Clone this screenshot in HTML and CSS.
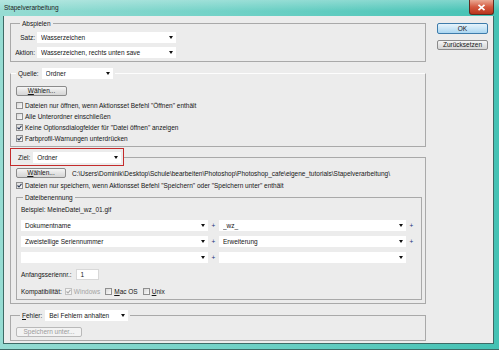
FILE: index.html
```html
<!DOCTYPE html>
<html lang="de">
<head>
    <meta charset="UTF-8">
    <meta name="viewport" content="width=device-width, initial-scale=1.0">
    <title>Stapelverarbeitung</title>
    <link rel="stylesheet" href="styles.css">
</head>
<body>
    <div class="window">
        <div class="titlebar">
            <span class="title">Stapelverarbeitung</span>
            <span class="close">
                <svg width="9" height="7" viewBox="0 0 9 7"><path d="M1.5 0.8 L7.5 6.2 M7.5 0.8 L1.5 6.2" stroke="#fff" stroke-width="1.7"/></svg>
            </span>
        </div>
        <div class="client">
            <div class="main">
                <fieldset class="group play">
                    <legend class="legend legend-play">Abspielen</legend>
                    <div class="field">
                        <span class="field-label">Satz:</span>
                        <span class="select select-play"><span class="select-text">Wasserzeichen</span><span class="arrow"></span></span>
                    </div>
                    <div class="field field-gap">
                        <span class="field-label">Aktion:</span>
                        <span class="select select-play"><span class="select-text">Wasserzeichen, rechts unten save</span><span class="arrow"></span></span>
                    </div>
                </fieldset>

                <fieldset class="group source">
                    <legend class="legend legend-select">
                        <span class="legend-label">Quelle:</span>
                        <span class="select select-source"><span class="select-text">Ordner</span><span class="arrow"></span></span>
                    </legend>
                    <button class="btn btn-choose"><u>W</u>ählen...</button>
                    <div class="checks">
                        <label class="check-row"><span class="box"></span><span>Dateien nur öffnen, wenn Aktionsset Befehl "Öffnen" enthält</span></label>
                        <label class="check-row"><span class="box"></span><span>Alle Unterordner einschließen</span></label>
                        <label class="check-row"><span class="box"><svg width="5" height="5" viewBox="0 0 5 5"><path d="M0.5 2.5 L2 4 L4.5 0.8" fill="none" stroke="#2d3b57" stroke-width="1.1"/></svg></span><span>Keine Optionsdialogfelder für "Datei öffnen" anzeigen</span></label>
                        <label class="check-row"><span class="box"><svg width="5" height="5" viewBox="0 0 5 5"><path d="M0.5 2.5 L2 4 L4.5 0.8" fill="none" stroke="#2d3b57" stroke-width="1.1"/></svg></span><span>Farbprofil-Warnungen unterdrücken</span></label>
                    </div>
                </fieldset>

                <fieldset class="group target">
                    <legend class="legend legend-select legend-marked">
                        <span class="legend-label">Ziel:</span>
                        <span class="select select-target"><span class="select-text">Ordner</span><span class="arrow"></span></span>
                    </legend>
                    <div class="path-row">
                        <button class="btn btn-choose btn-target"><u>W</u>ählen...</button>
                        <span class="path">C:\Users\Dominik\Desktop\Schule\bearbeiten\Photoshop\Photoshop_cafe\eigene_tutorials\Stapelverarbeitung\</span>
                    </div>
                    <label class="check-row save-row"><span class="box"><svg width="5" height="5" viewBox="0 0 5 5"><path d="M0.5 2.5 L2 4 L4.5 0.8" fill="none" stroke="#2d3b57" stroke-width="1.1"/></svg></span><span>Dateien nur speichern, wenn Aktionsset Befehl "Speichern" oder "Speichern unter" enthält</span></label>

                    <fieldset class="group naming">
                        <legend class="legend legend-naming">Dateibenennung</legend>
                        <div class="example">Beispiel: MeineDatei_wz_01.gif</div>
                        <div class="name-row first">
                            <span class="select select-name"><span class="select-text">Dokumentname</span><span class="arrow"></span></span>
                            <span class="plus">+</span>
                            <span class="select select-name"><span class="select-text">_wz_</span><span class="arrow"></span></span>
                            <span class="plus">+</span>
                        </div>
                        <div class="name-row">
                            <span class="select select-name"><span class="select-text">Zweistellige Seriennummer</span><span class="arrow"></span></span>
                            <span class="plus">+</span>
                            <span class="select select-name"><span class="select-text">Erweiterung</span><span class="arrow"></span></span>
                            <span class="plus">+</span>
                        </div>
                        <div class="name-row">
                            <span class="select select-name"><span class="select-text"></span><span class="arrow"></span></span>
                            <span class="plus">+</span>
                            <span class="select select-name"><span class="select-text"></span><span class="arrow"></span></span>
                        </div>
                        <div class="serial-row">
                            <span class="serial-label">Anfangsseriennr.:</span>
                            <span class="input">1</span>
                        </div>
                        <div class="compat-row">
                            <span class="compat-label">Kompatibilität:</span>
                            <label class="compat disabled"><span class="box box-disabled"><svg width="5" height="5" viewBox="0 0 5 5"><path d="M0.5 2.5 L2 4 L4.5 0.8" fill="none" stroke="#a8a8a8" stroke-width="1.1"/></svg></span><span>Windows</span></label>
                            <label class="compat"><span class="box"></span><span><u>M</u>ac OS</span></label>
                            <label class="compat"><span class="box"></span><span><u>U</u>nix</span></label>
                        </div>
                    </fieldset>
                </fieldset>

                <fieldset class="group errors">
                    <legend class="legend legend-select legend-errors">
                        <span class="legend-label"><u>F</u>ehler:</span>
                        <span class="select select-errors"><span class="select-text">Bei Fehlern anhalten</span><span class="arrow"></span></span>
                    </legend>
                    <button class="btn btn-save" disabled>Speichern unter...</button>
                </fieldset>
            </div>

            <div class="side">
                <button class="btn btn-ok">OK</button>
                <button class="btn btn-reset">Zurücksetzen</button>
            </div>
        </div>
    </div>
</body>
</html>
```

FILE: styles.css
```css
* {
    box-sizing: border-box;
}

body {
    margin: 0;
    font-family: "Liberation Sans", Arial, sans-serif;
    font-size: 6.5px;
    line-height: 9px;
    color: #151515;
    background-color: #fff;
}

.window {
    width: 499px;
    height: 350px;
    display: flex;
    flex-direction: column;
    padding: 0 5px 5px 3px;
    background: linear-gradient(90deg, #96dcd3 0%, #72d2c7 45%, #44c2b4 100%);
    border-bottom: 1px solid #3d6b66;
}

.titlebar {
    height: 16px;
    display: flex;
    align-items: flex-start;
    margin: 0 -5px 0 -3px;
    padding-left: 4px;
    background: linear-gradient(rgba(255, 255, 255, 0.3), rgba(255, 255, 255, 0) 70%);
}

.title {
    line-height: 16px;
    color: #1c1c1c;
}

.close {
    margin-left: auto;
    margin-right: 5px;
    width: 25px;
    height: 15px;
    display: flex;
    align-items: center;
    justify-content: center;
    border: 1px solid #5e2b20;
    border-top: 0;
    border-radius: 0 0 3px 3px;
    background: linear-gradient(#eaa994, #d4593f 50%, #b9341c);
}

.client {
    flex: 1;
    display: flex;
    background-color: #ececec;
    border: 1px solid #3d6b66;
    border-top: 0;
    padding-left: 6px;
}

.main {
    width: 416px;
    padding-top: 3px;
    display: flex;
    flex-direction: column;
}

.side {
    width: 51px;
    margin-left: 11px;
    padding-top: 7px;
    display: flex;
    flex-direction: column;
    gap: 6px;
}

/* group boxes */
.group {
    margin: 0;
    min-width: 0;
    padding: 0 3px 3px 5px;
    border: 1px solid #a9a9a9;
}

.legend {
    padding: 0 2px;
    line-height: 9px;
}

.legend-select {
    display: flex;
    align-items: center;
}

.legend-label {
    margin-right: 3px;
}

.legend-play {
    margin-left: 4px;
}

.play {
    padding-top: 4px;
}

.field {
    display: flex;
    align-items: center;
    margin-left: -2px;
}

.field-gap {
    margin-top: 4px;
}

.field-label {
    width: 21px;
    margin-right: 2px;
    text-align: right;
}

.source {
    margin-top: 6px;
    padding-top: 7px;
    padding-bottom: 2px;
    border-top-color: #fdfdfd;
}

.target {
    margin-top: 1px;
    padding-top: 2px;
}

.legend-marked {
    margin-left: -6px;
    padding: 3px 2px 2px 7px;
    border: 1px solid #c42b2b;
}

.errors {
    margin-top: 6px;
    padding-top: 6px;
}

.legend-errors {
    margin-left: 4px;
}

/* dropdowns */
.select {
    display: flex;
    align-items: center;
    height: 11px;
    padding: 0 3px 0 4px;
    background-color: #fff;
}

.select-text {
    flex: 1;
    white-space: nowrap;
    overflow: hidden;
}

.arrow {
    width: 0;
    height: 0;
    border-left: 2px solid transparent;
    border-right: 2px solid transparent;
    border-top: 3px solid #111;
}

.select-play {
    width: 139px;
}

.select-source {
    width: 71px;
}

.select-target {
    width: 88px;
}

.select-errors {
    width: 83px;
}

.select-name {
    width: 187px;
}

/* buttons */
.btn {
    height: 10px;
    padding: 0;
    font: inherit;
    line-height: 8px;
    color: #151515;
    border: 1px solid #8b8b8b;
    border-radius: 2px;
    background: linear-gradient(#f6f6f6, #e4e4e4 50%, #d6d6d6);
}

.btn-choose {
    width: 51px;
}

.btn-target {
    width: 50px;
}

.btn-ok {
    height: 11px;
    border-color: #3e7cab;
    background: linear-gradient(#e6f3fb, #c9e5f6 50%, #aad6f1);
}

.btn-reset {
    height: 10px;
}

.btn-save {
    width: 66px;
    color: #9a9a9a;
    border-color: #b9b9b9;
    background: #f3f3f3;
}

/* checkboxes */
.checks {
    margin-top: 4px;
}

.check-row {
    display: flex;
    align-items: center;
    height: 11px;
    gap: 2px;
    white-space: nowrap;
}

.box {
    width: 7px;
    height: 7px;
    display: flex;
    align-items: center;
    justify-content: center;
    border: 1px solid #8f8f8f;
    background: linear-gradient(135deg, #d9d9d9, #fbfbfb);
}

.box svg {
    display: block;
}

.box-disabled {
    border-color: #c2c2c2;
    background: #f4f4f4;
}

/* target */
.path-row {
    display: flex;
    align-items: center;
    gap: 6px;
    white-space: nowrap;
}

.save-row {
    margin-top: 2px;
}

.naming {
    margin-top: 2px;
    padding: 3px 3px 3px 4px;
}

.legend-naming {
    margin-left: 2px;
}

.example {
    height: 9px;
}

.name-row {
    display: flex;
    align-items: center;
    margin-top: 5px;
}

.name-row.first {
    margin-top: 6px;
}

.plus {
    width: 11px;
    text-align: center;
    color: #20307a;
}

.serial-row {
    display: flex;
    align-items: center;
    gap: 4px;
    margin-top: 6px;
}

.input {
    width: 23px;
    height: 11px;
    padding-left: 4px;
    background-color: #fff;
    border: 1px solid #d8d8d8;
}

.compat-row {
    display: flex;
    align-items: center;
    margin-top: 7px;
    height: 9px;
    white-space: nowrap;
}

.compat-label {
    margin-right: 3px;
}

.compat {
    display: flex;
    align-items: center;
    gap: 2px;
    margin-right: 5px;
}

.disabled {
    color: #a3a3a3;
}
```
